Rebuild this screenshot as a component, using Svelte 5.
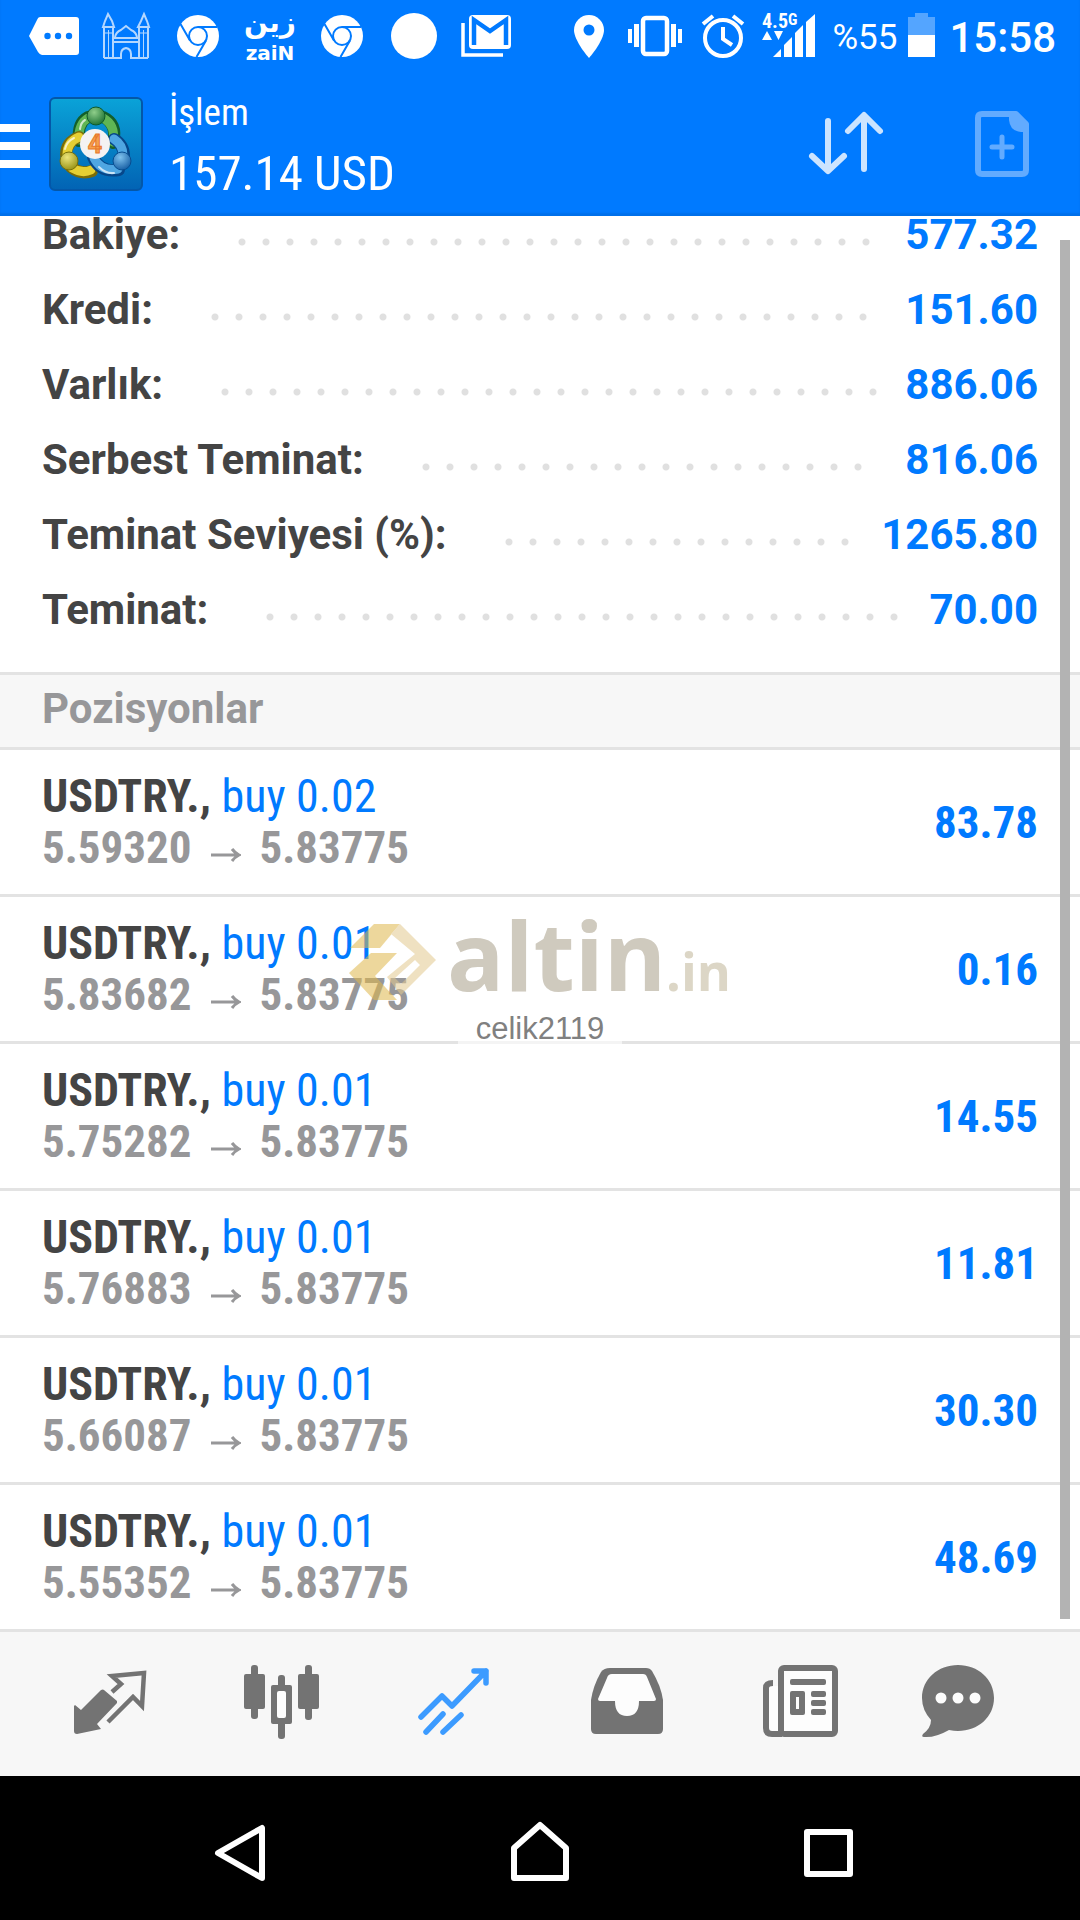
<script lang="ts">
  interface SummaryRow {
    label: string;
    value: string;
  }

  interface Position {
    symbol: string;
    side: string;
    open: string;
    current: string;
    profit: string;
  }

  const summary: SummaryRow[] = [
    { label: 'Bakiye:', value: '577.32' },
    { label: 'Kredi:', value: '151.60' },
    { label: 'Varlık:', value: '886.06' },
    { label: 'Serbest Teminat:', value: '816.06' },
    { label: 'Teminat Seviyesi (%):', value: '1265.80' },
    { label: 'Teminat:', value: '70.00' }
  ];

  const positions: Position[] = [
    { symbol: 'USDTRY.', side: 'buy 0.02', open: '5.59320', current: '5.83775', profit: '83.78' },
    { symbol: 'USDTRY.', side: 'buy 0.01', open: '5.83682', current: '5.83775', profit: '0.16' },
    { symbol: 'USDTRY.', side: 'buy 0.01', open: '5.75282', current: '5.83775', profit: '14.55' },
    { symbol: 'USDTRY.', side: 'buy 0.01', open: '5.76883', current: '5.83775', profit: '11.81' },
    { symbol: 'USDTRY.', side: 'buy 0.01', open: '5.66087', current: '5.83775', profit: '30.30' },
    { symbol: 'USDTRY.', side: 'buy 0.01', open: '5.55352', current: '5.83775', profit: '48.69' }
  ];
</script>

{#snippet chrome()}
  <svg width="72" height="72" viewBox="0 0 72 72">
    <circle cx="36" cy="36" r="21" fill="#fff" />
    <g fill="none" stroke="#007aff" stroke-width="2">
      <circle cx="36" cy="36" r="9" />
      <path d="M36 27h19M28 40.500L18.500 24M44 40.500L34.500 57" />
    </g>
  </svg>
{/snippet}

<div class="screen">
  <header class="top">
    <div class="status-bar">
      <div class="notifications">
        <svg width="72" height="72" viewBox="0 0 72 72">
          <path d="M22 17h36q3 0 3 3v32q0 3-3 3H24q-2 0-4-3l-9-16 8-16q1-3 3-3z" fill="#fff" />
          <g fill="#007aff">
            <circle cx="29.500" cy="36" r="3.200" />
            <circle cx="40" cy="36" r="3.200" />
            <circle cx="51" cy="36" r="3.200" />
          </g>
        </svg>
        <svg width="72" height="72" viewBox="0 0 72 72" fill="none" stroke="#b3d7ff" stroke-width="2">
          <path d="M14 58V27h9v31M49 58V27h9v31M13 27l2-6 3-7 4 7 2 6zM48 27l3-6 3-7 3 7 2 6z" />
          <path d="M23 42h26M23 38h26M25 37q1-5 6-7l5-4 5 4q5 2 6 7" />
          <path d="M18.500 30v27M53.500 30v27M14 33h9M49 33h9" stroke-width="1" />
          <path d="M14 58h17v-4q0-5 5-6 5 1 5 6v4h17" />
        </svg>
        {@render chrome()}
        <svg width="72" height="72" viewBox="0 0 72 72" fill="#fff">
          <text class="zain-ar" x="36" y="32" text-anchor="middle">زين</text>
          <text class="zain" x="36" y="60" text-anchor="middle">zaiN</text>
        </svg>
        {@render chrome()}
        <svg width="72" height="72" viewBox="0 0 72 72">
          <circle cx="36" cy="36" r="23" fill="#fff" />
        </svg>
        <svg width="72" height="72" viewBox="0 0 72 72">
          <path d="M13 23v32h40" fill="none" stroke="#fff" stroke-width="3.500" />
          <rect x="19" y="15" width="42" height="34" rx="4" fill="#fff" />
          <path d="M24 45V20l16 11 16-11v25" fill="none" stroke="#007aff" stroke-width="4.500" />
        </svg>
      </div>

      <div class="indicators">
        <svg width="67" height="72" viewBox="0 0 67 72">
          <path d="M33 15a15 15 0 0 1 15 15c0 11-15 28-15 28S18 41 18 30a15 15 0 0 1 15-15z" fill="#fff" />
          <circle cx="33" cy="30" r="5.500" fill="#007aff" />
        </svg>
        <svg width="67" height="72" viewBox="0 0 67 72" fill="#fff">
          <rect x="20" y="18" width="24" height="36" rx="3" fill="none" stroke="#fff" stroke-width="4.500" />
          <path d="M5 29h4v14H5zM11 24h5v23h-5zM48 24h5v23h-5zM55 29h4v14h-4z" />
        </svg>
        <svg width="67" height="72" viewBox="0 0 67 72" fill="none" stroke="#fff" stroke-width="4">
          <circle cx="33" cy="38" r="18" />
          <path d="M33 27v12l9 6M13 24l10-8M53 24l-10-8" />
        </svg>
        <svg width="75" height="72" viewBox="0 0 75 72" fill="#fff">
          <text class="network" x="5" y="28">4.5</text>
          <text class="network-g" x="31" y="25">G</text>
          <path d="M5 40l5-9 5 9zM17 31h9l-4.500 9z" />
          <path d="M16 57l8-8v8zM27 57V45l8-8v20zM38 57V33l8-8v32zM49 57V22l9-8v43z" />
        </svg>
        <span class="battery-level">%55</span>
        <svg width="48" height="72" viewBox="0 0 48 72" fill="#fff">
          <path d="M11 35V17h7v-4h13v4h7v18z" opacity=".33" />
          <path d="M11 35h27v22H11z" />
        </svg>
        <span class="clock">15:58</span>
      </div>
    </div>

    <div class="app-bar">
      <button class="icon-button" aria-label="Menü">
        <svg width="30" height="48" viewBox="0 0 30 48" fill="#fff">
          <path d="M0 4h30v8H0zM0 22h30v8H0zM0 40h30v8H0z" />
        </svg>
      </button>
      <svg class="logo" width="94" height="94" viewBox="0 0 94 94">
        <defs>
          <linearGradient id="tile" x1="0" y1="0" x2="0" y2="1">
            <stop offset="0" stop-color="#0aa3d8" />
            <stop offset="1" stop-color="#0263b4" />
          </linearGradient>
          <radialGradient id="green" cx=".4" cy=".3" r=".8">
            <stop offset="0" stop-color="#8fce8a" />
            <stop offset="1" stop-color="#12692b" />
          </radialGradient>
          <radialGradient id="yellow" cx=".4" cy=".3" r=".8">
            <stop offset="0" stop-color="#ece57a" />
            <stop offset="1" stop-color="#8f8a0c" />
          </radialGradient>
          <radialGradient id="blue" cx=".4" cy=".3" r=".8">
            <stop offset="0" stop-color="#7fc2ee" />
            <stop offset="1" stop-color="#0c549c" />
          </radialGradient>
        </defs>
        <rect x="1" y="1" width="92" height="92" rx="5" fill="url(#tile)" stroke="#0457a8" stroke-width="2" />
        <g fill="none" stroke-linecap="round">
          <path d="M30 44Q28 26 39 20M54 20q15 7 10 26" stroke="#145f2a" stroke-width="12" />
          <path d="M30 43Q29 27 39 21M54 21q13 7 10 24" stroke="#5fb554" stroke-width="9" />
          <path d="M30 40q-13 5-13 18M22 70q10 8 21 4" stroke="#7b6c08" stroke-width="12" />
          <path d="M30 40q-12 5-12 18M23 71q10 6 19 2" stroke="#e5cf33" stroke-width="9" />
          <path d="M65 42q10 6 10 17M44 60q7 16 26 13" stroke="#07478a" stroke-width="12" />
          <path d="M65 42q9 6 9 16M45 61q7 14 24 11" stroke="#4fa6e2" stroke-width="9" />
          <path d="M31 32q1-7 5-9M16 52q2-8 9-11M50 70q7 7 15 6" stroke="#fff" stroke-width="2" opacity=".7" />
        </g>
        <circle cx="47" cy="19" r="9" fill="url(#green)" stroke="#0d5a2a" />
        <circle cx="20" cy="64" r="9" fill="url(#yellow)" stroke="#77700b" />
        <circle cx="73" cy="64" r="9" fill="url(#blue)" stroke="#084d90" />
        <circle cx="46" cy="47" r="15" fill="#f4f2f2" />
        <text class="logo-text" x="46" y="56" text-anchor="middle">4</text>
      </svg>
      <div class="titles">
        <h1>İşlem</h1>
        <p class="balance">157.14 USD</p>
      </div>
      <button class="icon-button" aria-label="Sırala">
        <svg width="96" height="96" viewBox="0 0 96 96" fill="none" stroke="#cce4ff" stroke-width="6" stroke-linecap="round" stroke-linejoin="round">
          <path d="M30 25v49M14 60l16 15 16-15M66 73V20M50 35l16-16 16 16" />
        </svg>
      </button>
      <button class="icon-button new-order" aria-label="Yeni emir">
        <svg width="96" height="96" viewBox="0 0 96 96">
          <g fill="none" stroke="#62abff" stroke-width="6" stroke-linejoin="round">
            <path d="M59 18H25q-4 0-4 4v52q0 4 4 4h40q4 0 4-4V28z" />
            <path d="M45 41v20M35 51h20" stroke-linecap="round" stroke-width="5" />
          </g>
          <path d="M52 17h8l11 11v8h-7q-11-1-12-12z" fill="#62abff" />
        </svg>
      </button>
    </div>
  </header>

  <main>
    <dl class="summary">
      {#each summary as row}
        <div class="summary-row">
          <dt>{row.label}</dt>
          <span class="dots"></span>
          <dd>{row.value}</dd>
        </div>
      {/each}
    </dl>

    <h2>Pozisyonlar</h2>

    <ul class="positions">
      {#each positions as position}
        <li>
          <div class="details">
            <div class="order"><b>{position.symbol},</b> <span class="side">{position.side}</span></div>
            <div class="prices">
              <span>{position.open}</span>
              <svg width="30" height="51" viewBox="0 0 30 51" fill="none" stroke="currentColor" stroke-width="3">
                <path d="M0 33h28M21 27q3 4 7 6-4 2-7 6" />
              </svg>
              <span>{position.current}</span>
            </div>
          </div>
          <strong>{position.profit}</strong>
        </li>
      {/each}
    </ul>

    <div class="watermark">
      <div class="brand">
        <svg width="88" height="80" viewBox="0 0 88 80">
          <path d="M25 1h26L31 25H1z" fill="#e0b84c" />
          <path d="M22 30h26L26 53l22 24H25L0 50z" fill="#e0b84c" />
          <path d="M51 1l36 36-35 35-14-18 28-23-24-20zM66 37L46 55l6 6 19-19z" fill="#e3c98f" fill-rule="evenodd" />
        </svg>
        <span class="brand-name">altin</span><span class="brand-tld">.in</span>
      </div>
      <span class="user">celik2119</span>
    </div>

    <div class="scrollbar"></div>
  </main>

  <nav class="tabs">
    <a href="#quotes" aria-label="Fiyatlar">
      <svg width="108" height="96" viewBox="0 0 108 96">
        <path d="M19 49l6 5 20-20q2-1 3 0l13 11v2L41 68l4 5-24 5q-3 0-3-3V50z" fill="currentColor" />
        <path d="M56 36l9-8-9-8 32-3-2 33-9-9-25 25" fill="none" stroke="currentColor" stroke-width="4.500" />
      </svg>
    </a>
    <a href="#charts" aria-label="Grafikler">
      <svg width="108" height="96" viewBox="0 0 108 96" fill="currentColor">
        <rect x="16" y="18" width="21" height="35" rx="2" />
        <rect x="23" y="9" width="7" height="54" rx="3" />
        <rect x="70" y="18" width="21" height="35" rx="2" />
        <rect x="77" y="9" width="7" height="55" rx="3" />
        <rect x="50" y="19" width="7" height="64" rx="3" />
        <rect x="43" y="29" width="21" height="39" rx="2" />
        <rect x="49" y="35" width="9" height="27" rx="2" fill="#fdfdfd" />
      </svg>
    </a>
    <a href="#trade" class="active" aria-label="İşlem">
      <svg width="108" height="96" viewBox="0 0 108 96" fill="none" stroke="currentColor" stroke-width="5.500" stroke-linecap="round" stroke-linejoin="round">
        <path d="M21 61l21-21 10 10 34-35M74 15h12v12M43 58L26 76M61 59L43 76" />
      </svg>
    </a>
    <a href="#history" aria-label="Geçmiş">
      <svg width="108" height="96" viewBox="0 0 108 96">
        <path d="M38 12h36q4 0 6 3 9 15 11 29v29q0 5-5 5H24q-5 0-5-5V44q2-14 10-28 3-4 9-4z" fill="currentColor" />
        <path d="M40 18h31q3 0 4 3l9 22q0 2-2 2H67q0 15-12 15T43 45H28q-2 0-2-2l9-21q1-4 5-4z" fill="#fdfdfd" />
      </svg>
    </a>
    <a href="#news" aria-label="Haberler">
      <svg width="108" height="96" viewBox="0 0 108 96">
        <path d="M25 30h9v45h-9zM40 15h48v60H40z" fill="#fdfdfd" />
        <g fill="none" stroke="currentColor" stroke-width="6">
          <rect x="37" y="12" width="54" height="66" rx="3" />
          <path d="M29 27q-7 0-7 5v40q0 6 6 6h10" />
        </g>
        <g fill="currentColor">
          <rect x="46" y="23" width="36" height="6" rx="2" />
          <rect x="46" y="35" width="15" height="24" rx="2" />
          <rect x="67" y="35" width="15" height="6" rx="2" />
          <rect x="67" y="44" width="15" height="6" rx="2" />
          <rect x="67" y="53" width="15" height="6" rx="2" />
        </g>
        <path d="M52 41h3v12h-3z" fill="#fdfdfd" />
      </svg>
    </a>
    <a href="#messages" aria-label="Mesajlar">
      <svg width="108" height="96" viewBox="0 0 108 96">
        <path d="M42 9c20 0 36 14 36 33S62 75 42 75q-4 0-9-1-14 8-25 7-3 0-1-3 8-6 8-14-9-10-9-22C6 23 22 9 42 9z" fill="currentColor" />
        <g fill="#fdfdfd">
          <circle cx="25" cy="42" r="5.500" />
          <circle cx="42" cy="42" r="5.500" />
          <circle cx="59" cy="42" r="5.500" />
        </g>
      </svg>
    </a>
  </nav>

  <div class="system-nav">
    <button class="icon-button" aria-label="Geri">
      <svg width="96" height="96" viewBox="0 0 96 96">
        <path d="M20 53l44-25v50z" />
      </svg>
    </button>
    <button class="icon-button" aria-label="Ana ekran">
      <svg width="96" height="96" viewBox="0 0 96 96">
        <path d="M22 78V48l26-23 26 23v30z" />
      </svg>
    </button>
    <button class="icon-button" aria-label="Son uygulamalar">
      <svg width="96" height="96" viewBox="0 0 96 96">
        <path d="M21 32h43v42H21z" />
      </svg>
    </button>
  </div>
</div>

<style>
  :global(body) {
    margin: 0;
    background: #fff;
  }

  .screen {
    font-family: Roboto, 'Liberation Sans', sans-serif;
    color: #444;
  }

  svg {
    display: block;
    flex: none;
  }

  .icon-button {
    padding: 0;
    border: 0;
    background: none;
    cursor: pointer;
  }

  .top {
    position: relative;
    z-index: 1;
    background: #007aff;
    box-shadow: inset 0 -3px 2px #0070ea;
    color: #fff;
  }

  .status-bar {
    display: flex;
    justify-content: space-between;
    height: 72px;
    padding: 0 24px 0 18px;
  }

  .notifications,
  .indicators {
    display: flex;
    align-items: center;
  }

  .zain-ar {
    font: bold 28px 'DejaVu Sans', sans-serif;
  }

  .zain {
    font: bold 20px 'DejaVu Sans', sans-serif;
  }

  .network {
    font: bold 20px 'Roboto Condensed', Roboto, sans-serif;
  }

  .network-g {
    font: bold 16px 'Roboto Condensed', Roboto, sans-serif;
  }

  .battery-level {
    padding-top: 2px;
    font-size: 35px;
    font-weight: 400;
  }

  .clock {
    padding: 2px 0 0 4px;
    font-size: 42px;
    font-weight: 500;
  }

  .app-bar {
    display: flex;
    align-items: center;
    height: 144px;
    padding-right: 27px;
  }

  .logo {
    margin: 0 26px 0 19px;
  }

  .logo-text {
    font: bold 25px Roboto, sans-serif;
    fill: #f5a14e;
    stroke: #e9782a;
  }

  .titles {
    flex: 1;
    font-family: 'Roboto Condensed', Roboto, sans-serif;
  }

  h1 {
    margin: 0;
    font-size: 37px;
    font-weight: 400;
    line-height: 60px;
  }

  .balance {
    margin: 0;
    font-size: 49px;
    line-height: 62px;
  }

  .new-order {
    margin-left: 63px;
  }

  main {
    position: relative;
  }

  .summary {
    /* list is scrolled a little under the header */
    margin: -19px 0 0;
    padding: 0 42px 25px;
    font-size: 42px;
    font-weight: 700;
  }

  .summary-row {
    display: flex;
    align-items: center;
    height: 75px;
  }

  .dots {
    flex: 1;
    height: 8px;
    margin: 14px 28px 0 58px;
    background: radial-gradient(circle at 4px 4px, #e0e0e0 3px, transparent 4px) 0 0 / 24px 8px repeat-x;
  }

  dd {
    margin: 0;
    color: #007aff;
  }

  h2 {
    margin: 0;
    padding: 0 42px 4px;
    border-top: 3px solid #e3e3e3;
    border-bottom: 3px solid #e3e3e3;
    background: #f7f7f7;
    color: #979799;
    font-size: 42px;
    line-height: 68px;
  }

  .positions {
    margin: 0;
    padding: 0;
    list-style: none;
    font-family: 'Roboto Condensed', Roboto, sans-serif;
    font-size: 45px;
    line-height: 51px;
  }

  .positions li {
    display: flex;
    align-items: center;
    justify-content: space-between;
    padding: 21px 42px;
    border-bottom: 3px solid #e3e3e3;
  }

  .positions strong,
  .side {
    color: #007aff;
  }

  .order {
    font-size: 46px;
  }

  .prices {
    display: flex;
    gap: 19px;
    color: #979799;
    font-weight: 700;
  }

  .watermark {
    position: absolute;
    top: 717px;
    left: 0;
    right: 0;
    display: flex;
    flex-direction: column;
    align-items: center;
    pointer-events: none;
  }

  .brand {
    display: flex;
    align-items: baseline;
    font-family: 'Open Sans', 'Noto Sans', sans-serif;
    font-weight: 700;
    line-height: 80px;
    opacity: 0.55;
  }

  .brand svg {
    align-self: center;
    margin-right: 10px;
  }

  .brand-name {
    color: #a89f8a;
    font-size: 95px;
  }

  .brand-tld {
    color: #c0b698;
    font-size: 52px;
  }

  .user {
    padding: 0 18px;
    background: rgba(255, 255, 255, 0.6);
    color: #808080;
    font-family: 'Liberation Sans', Arial, sans-serif;
    font-size: 31px;
    line-height: 36px;
  }

  .scrollbar {
    position: absolute;
    top: 43px;
    right: 10px;
    bottom: 13px;
    width: 10px;
    background: #b3b3b3;
  }

  .tabs {
    display: grid;
    grid-template-columns: repeat(6, 1fr);
    place-items: center;
    height: 144px;
    padding: 0 24px;
    background: #f7f7f7;
  }

  .tabs a {
    color: #737373;
  }

  .tabs .active {
    color: #3c9bff;
  }

  .system-nav {
    display: flex;
    align-items: center;
    justify-content: center;
    gap: 198px;
    height: 144px;
    background: #000;
  }

  .system-nav path {
    fill: none;
    stroke: #fff;
    stroke-width: 6;
    stroke-linejoin: round;
  }
</style>
